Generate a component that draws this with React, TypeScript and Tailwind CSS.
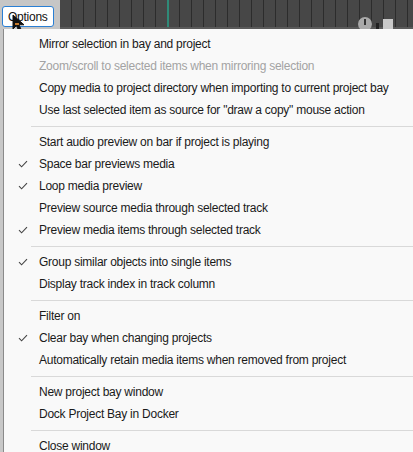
import React from "react";

type Item = { label: string; checked?: boolean; disabled?: boolean } | "sep";

const items: Item[] = [
  { label: "Mirror selection in bay and project" },
  { label: "Zoom/scroll to selected items when mirroring selection", disabled: true },
  { label: "Copy media to project directory when importing to current project bay" },
  { label: 'Use last selected item as source for "draw a copy" mouse action' },
  "sep",
  { label: "Start audio preview on bar if project is playing" },
  { label: "Space bar previews media", checked: true },
  { label: "Loop media preview", checked: true },
  { label: "Preview source media through selected track" },
  { label: "Preview media items through selected track", checked: true },
  "sep",
  { label: "Group similar objects into single items", checked: true },
  { label: "Display track index in track column" },
  "sep",
  { label: "Filter on" },
  { label: "Clear bay when changing projects", checked: true },
  { label: "Automatically retain media items when removed from project" },
  "sep",
  { label: "New project bay window" },
  { label: "Dock Project Bay in Docker" },
  "sep",
  { label: "Close window" },
];

function Check() {
  return (
    <svg width="10" height="8" viewBox="0 0 10 8" className="text-[#444]">
      <path d="M1 4.2 L3.6 6.8 L9 1.2" fill="none" stroke="currentColor" strokeWidth="1.1" />
    </svg>
  );
}

export default function App() {
  return (
    <div
      className="relative h-[452px] w-[413px] overflow-hidden bg-[#c8c8c8]"
      style={{ fontFamily: '"Liberation Sans", Arial, sans-serif' }}
    >
      {/* top strip */}
      <div className="flex h-[29px]">
        <div className="flex w-[60px] items-start bg-[#c6c6c6] pl-[2px] pt-[6px]">
          <div className="flex h-[21px] items-center rounded-[3px] border border-[#2a7fd4] bg-white px-[5px] text-[12px] tracking-[-0.25px] text-[#111]">
            Options
          </div>
        </div>
        <div className="flex-1 border-b-2 border-[#5a5a5a] bg-[#474747] bg-[repeating-linear-gradient(90deg,transparent_0px,transparent_11px,#2c2c2c_11px,#2c2c2c_12px)]">
          <div className="ml-[107px] h-full w-[2px] bg-[#2f8a78]" />
        </div>
      </div>

      {/* knob peeking under the menu */}
      <div className="absolute left-[358px] top-[17px] flex items-end gap-[4px]">
        <div className="flex h-[14px] w-[14px] justify-center rounded-full bg-[#a9a9a9] pt-[2px]">
          <div className="h-[6px] w-[2px] bg-[#333]" />
        </div>
        <div className="h-[8px] w-[3px] bg-[#222]" />
        <div className="h-[12px] w-[10px] bg-[#c9c9c9]" />
      </div>

      {/* cursor */}
      <svg className="absolute left-[12px] top-[14px]" width="14" height="20" viewBox="0 0 14 20">
        <path d="M1 1 L1 15 L4.5 11.5 L7 17.5 L9.5 16.5 L7 10.8 L12 10.8 Z" fill="#111" stroke="#111" strokeWidth="1" />
        <path d="M3 10 L7 10" stroke="#c87a2a" strokeWidth="2" />
      </svg>

      {/* menu */}
      <div className="relative ml-[3px] h-full border-l border-[#8a8a8a] bg-[#f9f9f9] pt-[4px] text-[12px] tracking-[-0.25px] text-[#1a1a1a]">
        {items.map((it, i) =>
          it === "sep" ? (
            <div key={i} className="flex h-[10px] items-center pl-[27px]">
              <div className="h-px flex-1 bg-[#d9d9d9]" />
            </div>
          ) : (
            <div key={i} className="flex h-[22px] items-center">
              <div className="flex w-[35px] shrink-0 justify-center pl-[2px]">{it.checked && <Check />}</div>
              <span className={"whitespace-nowrap " + (it.disabled ? "text-[#a3a3a3]" : "")}>{it.label}</span>
            </div>
          )
        )}
      </div>
    </div>
  );
}
